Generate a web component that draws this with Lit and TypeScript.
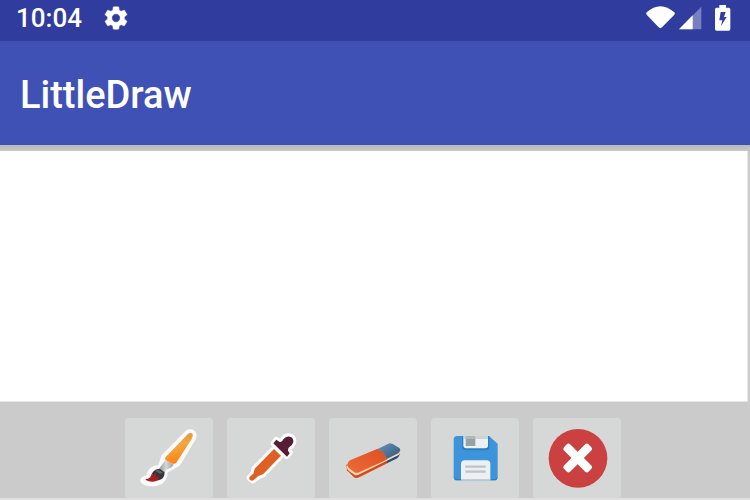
import { LitElement, html, css, svg } from "lit";
import { customElement, property } from "lit/decorators.js";

const tools = [
  {
    label: "Brush",
    viewBox: "15 24 264 240",
    art: svg`
      <defs>
        <linearGradient id="handle" x1="0" y1="0" x2="0.3" y2="1">
          <stop offset="0" stop-color="#e08a2c" /><stop offset="0.5" stop-color="#f0a840" /><stop offset="1" stop-color="#ff8210" />
        </linearGradient>
        <linearGradient id="ferrule"><stop offset="0" stop-color="#8e9092" /><stop offset="0.5" stop-color="#d5d7d8" /><stop offset="1" stop-color="#999b9d" /></linearGradient>
      </defs>
      <path d="M200 68Q211 59 221 68Q227 74 221 86L175 163L158 172L137 184Q137 214 112 221Q78 227 67 213Q65 204 84 202Q88 178 105 173L119 171L130 139Z"
        fill="#fafafa" stroke="#fafafa" stroke-width="12" stroke-linejoin="round" />
      <path d="M204 72Q212 66 218 73Q220 78 215 87L169 158Q163 163 156 161L138 151Q133 147 138 140Z" fill="url(#handle)" />
      <path d="M137 150L161 164L153 173L138 179L135 187L116 178Z" fill="url(#ferrule)" />
      <path d="M96 190Q105 175 120 177L134 187Q134 207 116 211L100 207Z" fill="#353638" />
      <path d="M105 181Q118 177 129 188L119 191Z" fill="#626568" />
      <path d="M77 207Q92 207 95 191L101 199L106 187L109 202L116 196L115 211Q96 220 77 210Z" fill="#a51e20" />`,
  },
  {
    label: "Eyedropper",
    viewBox: "6 24 264 240",
    art: svg`
      <g stroke="#fdfdfd" stroke-width="20" stroke-linejoin="round" fill="#fdfdfd">
        <path d="M147 119L167 136L112 193L99 198L83 210L75 203L87 190L89 177Z" />
        <path d="M154 91L164 97L172 95L179 84Q190 76 200 83Q208 93 199 105L188 114L193 127L185 137L147 101Z" />
      </g>
      <path d="M147 117L168 137L114 193L100 198L87 209Q79 216 73 208Q71 203 77 198L85 191L89 176Z" fill="#df6025" />
      <path d="M154 89L164 96Q171 98 175 88Q186 75 199 82Q211 92 200 106Q188 113 189 122L194 130L186 140L145 100Z" fill="#571d35" />`,
  },
  {
    label: "Eraser",
    viewBox: "12 24 264 240",
    art: svg`
      <defs>
        <linearGradient id="rubber" x1="0" y1="1" x2="1" y2="0"><stop offset="0" stop-color="#ed6b3b" /><stop offset="1" stop-color="#de4f20" /></linearGradient>
        <linearGradient id="blue" x1="0" y1="0" x2="1" y2="1"><stop offset="0" stop-color="#6695bd" /><stop offset="1" stop-color="#355477" /></linearGradient>
      </defs>
      <path d="M64 164L66 181L87 202Q92 206 104 201L187 160L185 137Z" fill="#df431b" />
      <path d="M183 140L186 160L214 146Q223 141 225 128Z" fill="#284c7b" />
      <path d="M65 168Q64 177 73 184L89 195Q96 198 105 192L221 135Q227 131 226 120L180 135L96 181L72 164Z" fill="#fbdfaa" />
      <path d="M158 117L190 101Q194 98 202 101L223 114Q230 121 220 130L184 148L177 133Z" fill="url(#blue)" />
      <path d="M68 160Q72 150 84 147L158 116L179 132L185 149L103 187Q94 191 87 186L71 173Q66 169 68 160Z" fill="url(#rubber)" />`,
  },
  {
    label: "Save",
    viewBox: "12 24 264 240",
    art: svg`
      <path d="M91 78H186L212 101V200Q212 211 201 211H91Q80 211 80 200V89Q80 78 91 78Z" fill="#3d94da" />
      <path d="M80 197V200Q80 211 91 211H201Q212 211 212 200V197Q212 207 201 207H91Q80 207 80 197Z" fill="#2b7cba" />
      <path d="M105 78H187V110Q187 121 176 121H116Q105 121 105 110Z" fill="#2b7fc2" />
      <path d="M109 78H183V106Q183 115 174 115H118Q109 115 109 106Z" fill="#ecf0f1" />
      <path d="M116 78H145V108H116Z" fill="#95a3a3" />
      <path d="M109 78H183V87H109Z" fill="#bdc3c5" opacity="0.65" />
      <path d="M102 211V162Q102 151 113 151H179Q190 151 190 162V211Z" fill="#ecf0f1" />
      <path d="M102 207H190V211H102Z" fill="#c7cdcf" />
      <path d="M115 170H176M115 185H176" stroke="#bdc3c7" stroke-width="7" />`,
  },
  {
    label: "Close",
    viewBox: "12 24 264 240",
    art: svg`
      <circle cx="147" cy="145" r="88" fill="#cb4142" />
      <g fill="#fdfdfd" transform="rotate(45 146 144)">
        <rect x="94" y="131" width="104" height="26" rx="7" />
        <rect x="133" y="92" width="26" height="104" rx="7" />
      </g>`,
  },
];

@customElement("status-bar")
class StatusBar extends LitElement {
  static styles = css`
    :host {
      display: flex;
      align-items: center;
      justify-content: space-between;
      box-sizing: border-box;
      height: 41px;
      padding: 0 19px 5px 16px;
      background: #303d9e;
      color: #fff;
      font: 500 26px/38px Roboto, sans-serif;
    }
    .group { display: flex; align-items: center; }
    svg { display: block; fill: #fff; }
    .gear { margin-left: 20px; }
    .signal { margin-left: 4px; }
    .battery { margin-left: 13px; }
  `;
  render() {
    return html`
      <div class="group">
        <time>10:04</time>
        <svg class="gear" width="28" height="28" viewBox="0 0 24 24" role="img" aria-label="Settings">
          <path stroke="#fff" stroke-width="0.4" d="M19.140 12.940c.040-.3.060-.610.060-.940s-.020-.640-.070-.940l2.030-1.580c.180-.140.230-.410.120-.610l-1.920-3.320c-.120-.220-.370-.290-.590-.220l-2.390.960c-.5-.380-1.030-.7-1.620-.940l-.360-2.540c-.040-.240-.240-.410-.480-.410h-3.840c-.240 0-.430.170-.470.410l-.360 2.540c-.590.240-1.130.570-1.620.940l-2.390-.960c-.220-.080-.470 0-.590.220L2.740 8.870c-.120.210-.080.470.120.610l2.030 1.580c-.050.3-.090.630-.090.940s.020.640.070.940l-2.030 1.580c-.180.140-.230.410-.120.610l1.920 3.320c.120.220.370.290.590.220l2.390-.960c.5.380 1.030.7 1.620.940l.360 2.540c.050.240.240.410.480.410h3.840c.240 0 .440-.170.470-.410l.360-2.540c.590-.240 1.130-.560 1.620-.940l2.390.960c.220.080.470 0 .590-.220l1.920-3.320c.120-.220.070-.470-.120-.610zM12 15.600A3.600 3.600 0 1 1 12 8.400a3.600 3.600 0 0 1 0 7.200z" />
        </svg>
      </div>
      <div class="group">
        <svg width="29" height="26" viewBox="0 0 87 78" role="img" aria-label="Wi-Fi">
          <path d="M2 22Q43 -14 85 22Q88 25 85 29L48 67Q43 72 38 67L2 29Q-1 25 2 22Z" />
        </svg>
        <svg class="signal" width="23" height="26" viewBox="0 0 69 78" role="img" aria-label="Mobile signal">
          <path d="M67 5V73H0Z" opacity="0.35" />
          <path d="M41 31V73H0Z" />
        </svg>
        <svg class="battery" width="16" height="26" viewBox="0 0 48 78" role="img" aria-label="Battery charging">
          <path fill-rule="evenodd" d="M13 0H33V8H41Q46 8 46 13V72Q46 77 41 77H5Q0 77 0 72V13Q0 8 5 8H13ZM17 21L13 46H22L18 63L35 36H27L32 21Z" />
        </svg>
      </div>
    `;
  }
}

@customElement("tool-button")
class ToolButton extends LitElement {
  @property({ attribute: false }) tool = tools[0];
  static styles = css`
    :host { display: block; }
    button {
      display: block;
      width: 88px;
      height: 80px;
      padding: 0;
      border: 0;
      border-radius: 4px 4px 2px 2px;
      background: #d6d8d7;
      cursor: pointer;
    }
    svg { display: block; width: 100%; height: 100%; }
  `;
  render() {
    return html`<button type="button" aria-label=${this.tool.label}>
      <svg viewBox=${this.tool.viewBox} aria-hidden="true">${this.tool.art}</svg>
    </button>`;
  }
}

@customElement("app-root")
class AppRoot extends LitElement {
  static styles = css`
    :host {
      display: flex;
      flex-direction: column;
      min-height: 100vh;
      box-sizing: border-box;
      background: #cbcbcb;
      border-bottom: 2px solid #dedede;
      font-family: Roboto, sans-serif;
    }
    header {
      display: flex;
      align-items: center;
      box-sizing: border-box;
      height: 104px;
      padding: 4px 20px 0;
      background: #3f51b5;
      color: #fff;
    }
    h1 { margin: 0; font-size: 38px; line-height: 44px; font-weight: 500; }
    main {
      display: flex;
      flex: 1;
      padding: 6px 2px 0 0;
      background: linear-gradient(#b9b9b9, #c8c8c8 6px, #cbcbcb 12px);
    }
    .canvas {
      flex: 1;
      border: solid #e8e8e8;
      border-width: 0 1px 1px 0;
      background: #fff;
    }
    nav {
      display: flex;
      justify-content: center;
      gap: 14px;
      padding: 16px 4px 0 0;
    }
  `;
  render() {
    return html`
      <status-bar></status-bar>
      <header><h1>LittleDraw</h1></header>
      <main><div class="canvas" role="img" aria-label="Drawing canvas"></div></main>
      <nav aria-label="Drawing tools">
        ${tools.map((tool) => html`<tool-button .tool=${tool}></tool-button>`)}
      </nav>
    `;
  }
}
